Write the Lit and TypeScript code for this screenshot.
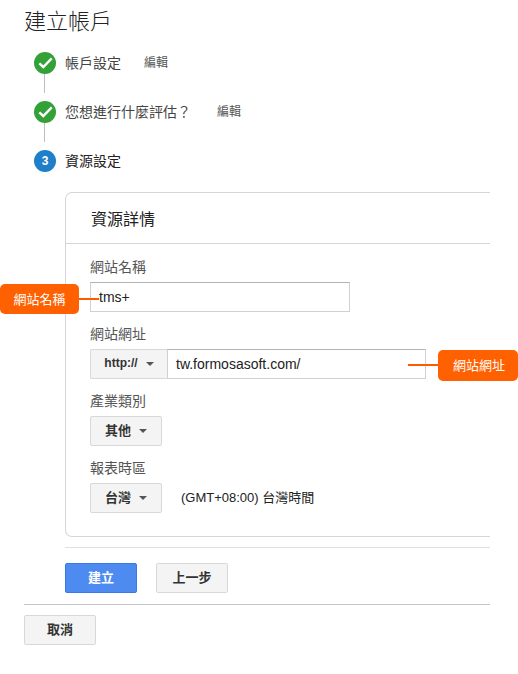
import { LitElement, html, css } from "lit";
import { customElement } from "lit/decorators.js";

const check = html`<svg class="ico" viewBox="0 0 22 22"><circle cx="11" cy="11" r="11" fill="#33a137"/><path d="M5.3 11.3L9.3 15L17.7 6.3" fill="none" stroke="#fff" stroke-width="2.4"/></svg>`;
const caret = html`<span class="caret"></span>`;

@customElement("app-root")
export class AppRoot extends LitElement {
  static styles = css`
    :host {
      display: block;
      position: relative;
      width: 518px;
      height: 674px;
      overflow: hidden;
      background: #fff;
      color: #222;
      font-family: "Liberation Sans", Arial, "Noto Sans CJK TC", sans-serif;
      font-size: 14px;
    }
    .page { padding: 0 28px 0 24px; }
    h1 {
      margin: 0;
      padding-top: 8px;
      height: 52px;
      box-sizing: border-box;
      font-size: 22px;
      line-height: 28px;
      font-weight: 300;
      color: #222;
    }
    .steps { padding-left: 10px; }
    .step { display: flex; align-items: center; height: 22px; }
    .ico { width: 22px; height: 22px; flex: none; }
    .num {
      width: 22px; height: 22px; border-radius: 50%; flex: none;
      background: #1f7fc9; color: #fff; font-size: 12px; font-weight: 700;
      display: flex; align-items: center; justify-content: center;
    }
    .step-label { margin: 0 0 3px 9px; font-size: 14px; color: #444; }
    .step-label.active { color: #222; }
    .edit { margin: 0 0 3px 23px; font-size: 12px; color: #555; }
    .edit.far { margin-left: 26px; }
    .conn { width: 1px; height: 19px; margin: 0 0 8px 10px; background: #bdbdbd; }
    .detail { margin: 20px 0 0 41px; }
    .card {
      border: 1px solid #d5d5dc;
      border-right: 0;
      border-radius: 7px 0 0 7px;
      height: 345px;
      box-sizing: border-box;
    }
    .card-head {
      height: 51px;
      box-sizing: border-box;
      border-bottom: 1px solid #d5d5dc;
      padding: 16px 0 0 25px;
      font-size: 16px;
      line-height: 22px;
      color: #222;
    }
    .card-body { padding: 13px 0 0 24px; }
    .label { font-size: 14px; line-height: 20px; color: #555; margin-bottom: 5px; }
    .field { margin-bottom: 12px; }
    .input {
      box-sizing: border-box;
      height: 30px;
      display: flex;
      align-items: center;
      border: 1px solid #d0d0d0;
      border-top-color: #b4b4b4;
      padding: 0 0 1px 8px;
      font-size: 14px;
      color: #222;
      background: #fff;
    }
    .input.name { width: 260px; }
    .input.url { width: 259px; padding-bottom: 0; }
    .row { display: flex; align-items: center; }
    .btn {
      box-sizing: border-box;
      width: 72px;
      height: 30px;
      display: flex;
      align-items: center;
      justify-content: center;
      border: 1px solid #d8d8d8;
      border-radius: 2px;
      background: #f4f4f4;
      color: #333;
      font-size: 13px;
      font-weight: 700;
      padding-bottom: 4px;
    }
    .btn.proto {
      width: 77px;
      border-radius: 2px 0 0 2px;
      border-right: 0;
      font-size: 12px;
      padding-bottom: 2px;
    }
    .caret {
      width: 0; height: 0; margin: 4px 0 0 8px;
      border-left: 4px solid transparent;
      border-right: 4px solid transparent;
      border-top: 4px solid #555;
    }
    .proto .caret { margin-top: 2px; }
    .tz { margin: 0 0 4px 19px; font-size: 13px; color: #222; }
    .actions {
      margin-top: 10px;
      border-top: 1px solid #e0e0e0;
      padding-top: 15px;
      height: 41px;
      display: flex;
      gap: 19px;
      box-sizing: content-box;
    }
    .btn.primary { background: #4d8bf0; border-color: #3b78e7; color: #fff; }
    .footer { border-top: 1px solid #c4c4c4; padding-top: 10px; }
    .tag {
      position: absolute;
      box-sizing: border-box;
      background: #ff6000;
      color: #fff;
      border-radius: 5px;
      font-size: 13px;
      display: flex;
      align-items: center;
      justify-content: center;
      padding-bottom: 2px;
    }
    .tag.a { left: 0; top: 284px; width: 79px; height: 30px; }
    .tag.b { left: 438px; top: 350px; width: 80px; height: 31px; padding-left: 2px; }
    .lead { position: absolute; height: 2px; background: #ff5a00; }
    .lead.a { left: 79px; top: 298px; width: 20px; }
    .lead.b { left: 408px; top: 364px; width: 30px; }
  `;

  render() {
    return html`
      <div class="page">
        <h1>建立帳戶</h1>
        <div class="steps">
          <div class="step">${check}<span class="step-label">帳戶設定</span><span class="edit">編輯</span></div>
          <div class="conn"></div>
          <div class="step">${check}<span class="step-label">您想進行什麼評估？</span><span class="edit far">編輯</span></div>
          <div class="conn"></div>
          <div class="step"><span class="num">3</span><span class="step-label active">資源設定</span></div>
        </div>
        <div class="detail">
          <div class="card">
            <div class="card-head">資源詳情</div>
            <div class="card-body">
              <div class="field">
                <div class="label">網站名稱</div>
                <div class="input name">tms+</div>
              </div>
              <div class="field">
                <div class="label">網站網址</div>
                <div class="row">
                  <div class="btn proto">http://${caret}</div>
                  <div class="input url">tw.formosasoft.com/</div>
                </div>
              </div>
              <div class="field">
                <div class="label">產業類別</div>
                <div class="btn">其他${caret}</div>
              </div>
              <div class="field">
                <div class="label">報表時區</div>
                <div class="row">
                  <div class="btn">台灣${caret}</div>
                  <span class="tz">(GMT+08:00) 台灣時間</span>
                </div>
              </div>
            </div>
          </div>
          <div class="actions">
            <div class="btn primary">建立</div>
            <div class="btn">上一步</div>
          </div>
        </div>
        <div class="footer"><div class="btn">取消</div></div>
      </div>
      <div class="lead a"></div>
      <div class="tag a">網站名稱</div>
      <div class="lead b"></div>
      <div class="tag b">網站網址</div>
    `;
  }
}
